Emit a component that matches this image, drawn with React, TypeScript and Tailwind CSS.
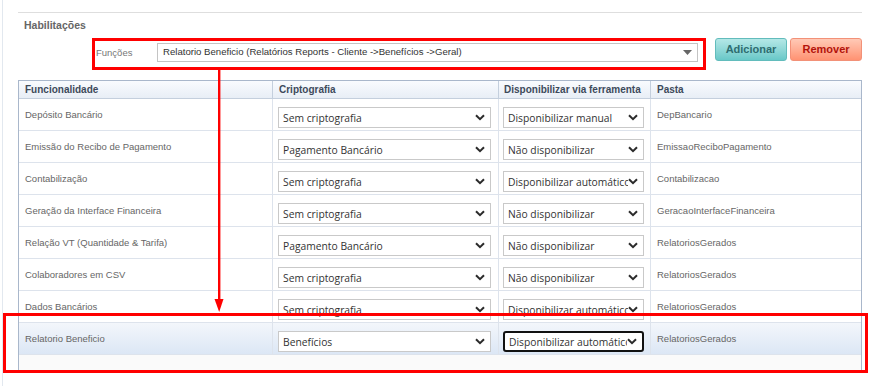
const rows = [
  { name: "Depósito Bancário", cripto: "Sem criptografia", disp: "Disponibilizar manual", pasta: "DepBancario" },
  { name: "Emissão do Recibo de Pagamento", cripto: "Pagamento Bancário", disp: "Não disponibilizar", pasta: "EmissaoReciboPagamento" },
  { name: "Contabilização", cripto: "Sem criptografia", disp: "Disponibilizar automático", pasta: "Contabilizacao" },
  { name: "Geração da Interface Financeira", cripto: "Sem criptografia", disp: "Não disponibilizar", pasta: "GeracaoInterfaceFinanceira" },
  { name: "Relação VT (Quantidade & Tarifa)", cripto: "Pagamento Bancário", disp: "Não disponibilizar", pasta: "RelatoriosGerados" },
  { name: "Colaboradores em CSV", cripto: "Sem criptografia", disp: "Não disponibilizar", pasta: "RelatoriosGerados" },
  { name: "Dados Bancários", cripto: "Sem criptografia", disp: "Disponibilizar automático", pasta: "RelatoriosGerados" },
  { name: "Relatorio Beneficio", cripto: "Benefícios", disp: "Disponibilizar automático", pasta: "RelatoriosGerados", selected: true },
];

function Chevron() {
  return (
    <svg width="10" height="7" viewBox="0 0 10 7" className="shrink-0">
      <path d="M1 1.2 L5 5.2 L9 1.2" fill="none" stroke="#2b2b2b" strokeWidth="2" />
    </svg>
  );
}

function FakeSelect({ value, width, focused }: { value: string; width: string; focused?: boolean }) {
  return (
    <div
      className={`${width} flex h-[21px] items-center bg-white pl-[4px] pr-[5px] font-['Open_Sans',sans-serif] text-[10.3px] text-[#333] ${
        focused ? "rounded-[3px] border-2 border-[#111] pl-[3px] pr-[4px]" : "border border-[#c9c9c9]"
      }`}
    >
      <span className="flex-1 overflow-hidden whitespace-nowrap pt-[1px] leading-[20px]">{value}</span>
      <Chevron />
    </div>
  );
}

export default function App() {
  return (
    <div className="relative h-[386px] w-[870px] overflow-hidden bg-white pl-[2px] font-['Liberation_Sans',Arial,sans-serif]">
      <div className="flex h-full flex-col border-l border-[#e2e8ef] pl-[15px] pr-[8px] pt-[12px]">
        <div className="border-t border-[#dedede]" />
        <div className="mt-[5px] pl-[6px] text-[10.5px] font-bold leading-[14px] text-[#666]">Habilitações</div>

        {/* funções */}
        <div className="mt-[6px] flex items-start">
          <div className="ml-[74px] flex h-[32px] w-[614px] items-start border-[3px] border-[#ff0000]">
            <div className="mt-[2px] w-[62px] pl-[1px] text-[9.5px] leading-[19px] text-[#777]">Funções</div>
            <div className="mt-[2px] flex h-[19px] w-[541px] items-center border border-[#c4c4c4] bg-white pl-[5px] pr-[5px]">
              <span className="flex-1 whitespace-nowrap text-[9.6px] text-[#333]">
                Relatorio Beneficio (Relatórios Reports - Cliente -&gt;Benefícios -&gt;Geral)
              </span>
              <svg width="9" height="5" viewBox="0 0 9 5" className="shrink-0">
                <path d="M0 0 H9 L4.5 5 Z" fill="#666" />
              </svg>
            </div>
          </div>
          <button className="ml-[9px] h-[23px] w-[72px] rounded-[3px] border border-[#62bcbc] bg-gradient-to-b from-[#b4e8e7] to-[#68c8c8] text-[11px] font-bold text-[#2e6d70]">
            Adicionar
          </button>
          <button className="ml-[3px] h-[23px] w-[72px] rounded-[3px] border border-[#f29178] bg-gradient-to-b from-[#ffc9b6] to-[#ff9272] text-[11px] font-bold text-[#b3130b]">
            Remover
          </button>
        </div>

        {/* tabela */}
        <div className="mt-[10px] flex-1 border border-[#a9b7cb] bg-[#fafafa]">
          <div className="grid h-[18px] grid-cols-[254px_226px_152px_1fr] border-b border-[#c4cfdd] bg-gradient-to-b from-[#f9fbfe] to-[#e8eef6] text-[10px] font-bold text-[#3d4a5b]">
            <div className="flex items-center border-r border-[#c4cfdd] pl-[6px]">Funcionalidade</div>
            <div className="flex items-center border-r border-[#c4cfdd] pl-[6px]">Criptografia</div>
            <div className="flex items-center border-r border-[#c4cfdd] pl-[5px]">Disponibilizar via ferramenta</div>
            <div className="flex items-center pl-[6px]">Pasta</div>
          </div>
          {rows.map((r) => (
            <div
              key={r.name}
              className={`grid h-[32px] grid-cols-[254px_226px_152px_1fr] border-b border-[#dde3ec] text-[9.5px] text-[#666] ${
                r.selected ? "bg-gradient-to-b from-[#f3f6fb] to-[#dce7f5]" : "bg-white"
              }`}
            >
              <div className="border-r border-[#dde3ec] pl-[6px] pt-[10px] leading-[12px]">{r.name}</div>
              <div className="border-r border-[#dde3ec] pl-[5px] pt-[8px]">
                <FakeSelect value={r.cripto} width="w-[213px]" />
              </div>
              <div className="border-r border-[#dde3ec] pl-[4px] pt-[8px]">
                <FakeSelect value={r.disp} width="w-[141px]" focused={r.selected} />
              </div>
              <div className="pl-[6px] pt-[10px] leading-[12px]">{r.pasta}</div>
            </div>
          ))}
        </div>
        <div className="h-[14px]" />
      </div>

      {/* anotações */}
      <svg width="12" height="244" viewBox="0 0 12 244" className="absolute left-[213px] top-[69px]">
        <rect x="5" y="0" width="2.4" height="232" fill="#ff0000" />
        <path d="M1.5 230 H10.5 L6.2 243 Z" fill="#ff0000" />
      </svg>
      <div className="absolute left-[3px] top-[313px] h-[60px] w-[865px] border-[3px] border-[#ff0000]" />
    </div>
  );
}
